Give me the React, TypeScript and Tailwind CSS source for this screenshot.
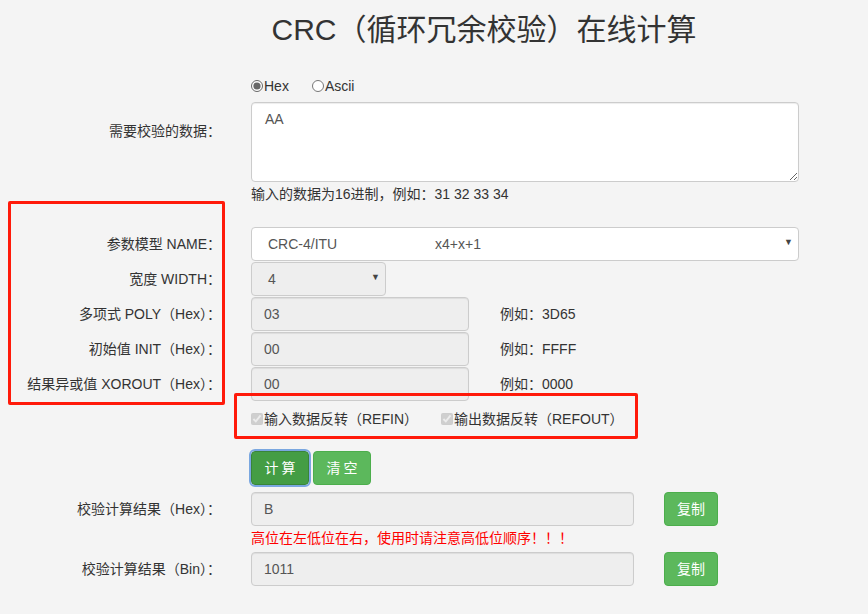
const font = 'font-["Liberation_Sans","Noto_Sans_CJK_SC",sans-serif]';

function Label({ children, top = false }: { children: React.ReactNode; top?: boolean }) {
  return (
    <div className={`w-[236px] shrink-0 pr-[15px] text-right text-[14px] text-[#333] ${top ? 'pt-[19px]' : ''}`}>
      {children}
    </div>
  );
}

function Field({ value, width = 'w-[218px]' }: { value: string; width?: string }) {
  return (
    <div
      className={`${width} h-[34px] flex items-center rounded-[4px] border border-[#ccc] bg-[#eee] px-[12px] text-[14px] text-[#555] shadow-[inset_0_1px_1px_rgba(0,0,0,0.075)]`}
    >
      {value}
    </div>
  );
}

function ParamRow({ label, value, hint }: { label: string; value: string; hint: string }) {
  return (
    <div className="flex items-center h-[34px] mb-px">
      <Label>{label}</Label>
      <div className="pl-[15px] flex items-center">
        <Field value={value} />
        <span className="ml-[31px] text-[14px] text-[#333]">{hint}</span>
      </div>
    </div>
  );
}

function ResultRow({ label, value }: { label: string; value: string }) {
  return (
    <div className="flex items-center h-[34px]">
      <Label>{label}</Label>
      <div className="pl-[15px] flex items-center">
        <Field value={value} width="w-[383px]" />
        <button className="ml-[30px] w-[54px] h-[34px] rounded-[4px] border border-[#4cae4c] bg-[#5cb85c] text-white text-[14px]">
          复制
        </button>
      </div>
    </div>
  );
}

export default function App() {
  return (
    <div className={`relative min-h-screen bg-[#f4f4f4] ${font}`}>
      <h1 className="pl-[100px] pt-[9px] text-center text-[30px] leading-[42px] text-[#333] font-normal">
        CRC（循环冗余校验）在线计算
      </h1>

      <div className="mt-[26px] pl-[251px] flex items-center h-[18px] text-[14px] text-[#333]">
        <label className="flex items-center">
          <input type="radio" name="fmt" defaultChecked className="m-0 w-[12px] h-[12px] accent-[#666]" />
          <span className="ml-px">Hex</span>
        </label>
        <label className="flex items-center ml-[23px]">
          <input type="radio" name="fmt" className="m-0 w-[12px] h-[12px]" />
          <span className="ml-px">Ascii</span>
        </label>
      </div>

      <div className="mt-[7px] flex items-start">
        <Label top>需要校验的数据：</Label>
        <div className="pl-[15px]">
          <textarea
            defaultValue="AA"
            className="block w-[548px] h-[80px] rounded-[4px] border border-[#ccc] bg-white px-[13px] py-[6px] text-[14px] text-[#555] shadow-[inset_0_1px_1px_rgba(0,0,0,0.075)] outline-none"
          />
        </div>
      </div>
      <div className="pl-[251px] mt-[2px] h-[20px] text-[14px] leading-[20px] text-[#333]">
        输入的数据为16进制，例如：31 32 33 34
      </div>

      <div className="mt-[23px] flex items-center h-[34px] mb-px">
        <Label>参数模型 NAME：</Label>
        <div className="pl-[15px]">
          <div className="relative w-[548px] h-[34px] flex items-center rounded-[4px] border border-[#ccc] bg-white pl-[16px] text-[14px] text-[#555]">
            <span className="w-[167px]">CRC-4/ITU</span>
            <span>x4+x+1</span>
            <span className="absolute right-[5px] top-[8px] text-[9px] text-[#444]">▼</span>
          </div>
        </div>
      </div>

      <div className="flex items-center h-[34px] mb-px">
        <Label>宽度 WIDTH：</Label>
        <div className="pl-[15px]">
          <div className="relative w-[135px] h-[34px] flex items-center rounded-[4px] border border-[#ccc] bg-[#eee] pl-[16px] text-[14px] text-[#555]">
            4
            <span className="absolute right-[5px] top-[8px] text-[9px] text-[#444]">▼</span>
          </div>
        </div>
      </div>

      <ParamRow label="多项式 POLY（Hex）：" value="03" hint="例如：3D65" />
      <ParamRow label="初始值 INIT（Hex）：" value="00" hint="例如：FFFF" />
      <ParamRow label="结果异或值 XOROUT（Hex）：" value="00" hint="例如：0000" />

      <div className="pl-[251px] mt-[9px] h-[18px] flex items-center text-[14px] text-[#333]">
        <label className="flex items-center">
          <input type="checkbox" checked disabled readOnly className="m-0 w-[12px] h-[12px]" />
          <span className="ml-px">输入数据反转（REFIN）</span>
        </label>
        <label className="flex items-center ml-[23px]">
          <input type="checkbox" checked disabled readOnly className="m-0 w-[12px] h-[12px]" />
          <span className="ml-px">输出数据反转（REFOUT）</span>
        </label>
      </div>

      <div className="pl-[251px] mt-[23px] flex gap-[4px]">
        <button className="w-[58px] h-[34px] rounded-[4px] border border-[#398439] bg-[#449d44] text-white text-[14px] tracking-[3px] pl-[3px] outline outline-2 outline-[#7aa7e0]">
          计算
        </button>
        <button className="w-[58px] h-[34px] rounded-[4px] border border-[#4cae4c] bg-[#5cb85c] text-white text-[14px] tracking-[3px] pl-[3px]">
          清空
        </button>
      </div>

      <div className="mt-[7px]">
        <ResultRow label="校验计算结果（Hex）：" value="B" />
      </div>
      <div className="pl-[251px] h-[24px] leading-[24px] text-[14px] text-[#f00]">
        高位在左低位在右，使用时请注意高低位顺序！！！
      </div>
      <div className="mt-[2px]">
        <ResultRow label="校验计算结果（Bin）：" value="1011" />
      </div>

      <div className="absolute left-[8px] top-[201px] w-[217px] h-[204px] border-[3px] border-[#ff1a0a] rounded-[2px] pointer-events-none" />
      <div className="absolute left-[234px] top-[393px] w-[404px] h-[46px] border-[3px] border-[#ff1a0a] rounded-[2px] pointer-events-none" />
    </div>
  );
}
